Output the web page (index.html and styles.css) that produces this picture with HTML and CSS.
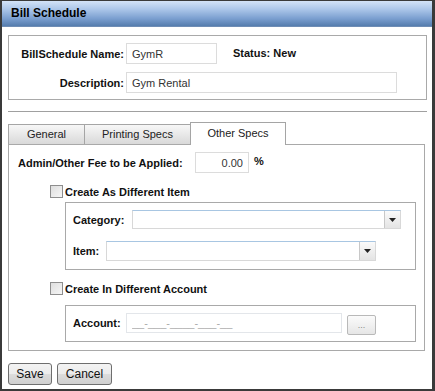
FILE: index.html
```html
<!doctype html>
<html>
<head>
    <meta charset="utf-8">
    <title>Bill Schedule</title>
    <link rel="stylesheet" href="styles.css">
</head>
<body>
<div class="window">
    <div class="titre">Bill Schedule</div>
    <div class="contenu">
        <div class="boite entete">
            <div class="ligne">
                <label class="etiquette etiquette-large">BillSchedule Name:</label>
                <input class="champ champ-nom" value="GymR">
                <span class="statut">Status: New</span>
            </div>
            <div class="ligne">
                <label class="etiquette etiquette-large">Description:</label>
                <input class="champ champ-desc" value="Gym Rental">
            </div>
        </div>

        <div class="separateur"></div>

        <div class="onglets">
            <div class="onglet onglet-general">General</div>
            <div class="onglet onglet-impression">Printing Specs</div>
            <div class="onglet onglet-autres actif">Other Specs</div>
        </div>

        <div class="panneau">
            <div class="ligne">
                <label class="etiquette etiquette-frais">Admin/Other Fee to be Applied:</label>
                <input class="champ champ-frais" value="0.00">
                <span class="pourcent">%</span>
            </div>

            <div class="case-ligne">
                <span class="case"></span>
                <span class="etiquette">Create As Different Item</span>
            </div>

            <div class="boite sous-boite">
                <div class="ligne">
                    <label class="etiquette etiquette-cat">Category:</label>
                    <div class="liste liste-cat"><span class="liste-bouton"><svg width="7" height="4" viewBox="0 0 7 4"><path d="M0 0h7L3.5 4z" fill="#222"/></svg></span></div>
                </div>
                <div class="ligne ligne-item">
                    <label class="etiquette etiquette-item">Item:</label>
                    <div class="liste liste-item"><span class="liste-bouton"><svg width="7" height="4" viewBox="0 0 7 4"><path d="M0 0h7L3.5 4z" fill="#222"/></svg></span></div>
                </div>
            </div>

            <div class="case-ligne">
                <span class="case"></span>
                <span class="etiquette">Create In Different Account</span>
            </div>

            <div class="boite sous-boite compte-boite">
                <div class="ligne ligne-compte">
                    <label class="etiquette etiquette-compte">Account:</label>
                    <input class="champ champ-compte" value="__-___-____-___-__">
                    <button type="button" class="bouton-points">...</button>
                </div>
            </div>
        </div>

        <div class="actions">
            <button type="button" class="bouton bouton-save">Save</button>
            <button type="button" class="bouton bouton-cancel">Cancel</button>
        </div>
    </div>
</div>
</body>
</html>
```

FILE: styles.css
```css
body {
    margin: 0;
    font-family: "Liberation Sans", Arial, sans-serif;
    font-size: 11px;
    color: #111;
}

.window {
    width: 435px;
    height: 391px;
    box-sizing: border-box;
    border-top: 1px solid #3a3a3a;
    border-left: 2px solid #3a3a3a;
    border-right: 3px solid #3a3a3a;
    border-bottom: 2px solid #3a3a3a;
    background: #fff;
}

.titre {
    height: 25px;
    line-height: 25px;
    padding-left: 9px;
    font-size: 12px;
    font-weight: bold;
    color: #000;
    background: linear-gradient(#d3e3f7, #a9c4e8 35%, #7b9fd0 70%, #557dae);
    border-bottom: 1px solid #6f8db5;
}

.contenu {
    padding: 8px 0 0 6px;
}

.boite {
    border: 1px solid #a9a9a9;
    box-sizing: border-box;
}

.entete {
    width: 419px;
    padding: 7px 0 6px 0;
}

.ligne {
    display: flex;
    align-items: center;
}

.entete .ligne + .ligne {
    margin-top: 8px;
}

.etiquette {
    font-weight: bold;
    color: #111;
}

.etiquette-large {
    width: 115px;
    margin-right: 2px;
    text-align: right;
}

.champ {
    box-sizing: border-box;
    height: 21px;
    border: 1px solid #dcdcdc;
    padding: 0 5px;
    font-family: "Liberation Sans", Arial, sans-serif;
    font-size: 11px;
    color: #333;
    background: #fff;
    margin: 0;
}

.champ-nom {
    width: 91px;
}

.statut {
    margin-left: 16px;
    margin-top: -2px;
    font-weight: bold;
}

.champ-desc {
    width: 271px;
}

.separateur {
    width: 419px;
    height: 1px;
    background: #a0a0a0;
    margin-top: 11px;
}

.onglets {
    display: flex;
    align-items: flex-end;
    height: 22px;
    margin-top: 10px;
}

.onglet {
    box-sizing: border-box;
    height: 20px;
    line-height: 19px;
    text-align: center;
    border: 1px solid #a5a5a5;
    border-bottom: none;
    background: linear-gradient(#f7f7f7, #e8e8e8 50%, #d9d9d9);
    color: #222;
    margin-right: -1px;
}

.onglet-general {
    width: 77px;
}

.onglet-impression {
    width: 107px;
}

.onglet-autres {
    width: 96px;
}

.onglet.actif {
    height: 23px;
    line-height: 21px;
    background: #fff;
    margin-bottom: -1px;
    position: relative;
}

.panneau {
    width: 417px;
    box-sizing: border-box;
    border: 1px solid #a9a9a9;
    padding: 7px 0 8px 9px;
}

.etiquette-frais {
    width: 177px;
}

.champ-frais {
    width: 54px;
    text-align: right;
}

.pourcent {
    margin-left: 5px;
    margin-top: -3px;
    font-weight: bold;
}

.case-ligne {
    display: flex;
    align-items: center;
    gap: 2px;
    margin: 12px 0 0 32px;
    height: 13px;
}

.case {
    width: 13px;
    height: 13px;
    box-sizing: border-box;
    border: 1px solid #8e8e8e;
    background: linear-gradient(135deg, #dedede, #f6f6f6);
}

.sous-boite {
    width: 351px;
    margin: 4px 0 0 47px;
    padding: 7px 0 8px 7px;
}

.compte-boite {
    margin-top: 10px;
    padding-bottom: 6px;
}

.ligne-item {
    margin-top: 12px;
}

.etiquette-cat {
    width: 59px;
}

.etiquette-item {
    width: 33px;
}

.liste {
    box-sizing: border-box;
    border: 1px solid #d8d8d8;
    border-top-color: #a8c6e2;
    background: #fff;
    display: flex;
    justify-content: flex-end;
}

.liste-cat {
    width: 269px;
    height: 19px;
}

.liste-item {
    width: 270px;
    height: 20px;
}

.liste-bouton {
    width: 15px;
    border-left: 1px solid #c8c8c8;
    background: linear-gradient(#fafafa, #e4e4e4);
    display: flex;
    align-items: center;
    justify-content: center;
}

.ligne-compte {
    align-items: flex-start;
}

.etiquette-compte {
    width: 53px;
    line-height: 20px;
}

.champ-compte {
    width: 216px;
    height: 20px;
    color: #aaa;
    border-color: #e3e6ea;
}

.bouton-points {
    width: 29px;
    height: 20px;
    margin: 2px 0 0 5px;
    padding: 0;
    border: 1px solid #b9b9b9;
    border-radius: 2px;
    background: linear-gradient(#fbfbfb, #e6e6e6);
    font-family: "Liberation Sans", Arial, sans-serif;
    font-size: 9px;
    color: #888;
}

.actions {
    display: flex;
    gap: 5px;
    margin-top: 12px;
}

.bouton {
    height: 22px;
    padding: 0;
    border: 1px solid #6e6e6e;
    border-radius: 3px;
    background: linear-gradient(#f3f3f3, #ebebeb 50%, #dcdcdc 51%, #cfcfcf);
    font-family: "Liberation Sans", Arial, sans-serif;
    font-size: 12px;
    color: #111;
}

.bouton-save {
    width: 44px;
}

.bouton-cancel {
    width: 55px;
}
```
